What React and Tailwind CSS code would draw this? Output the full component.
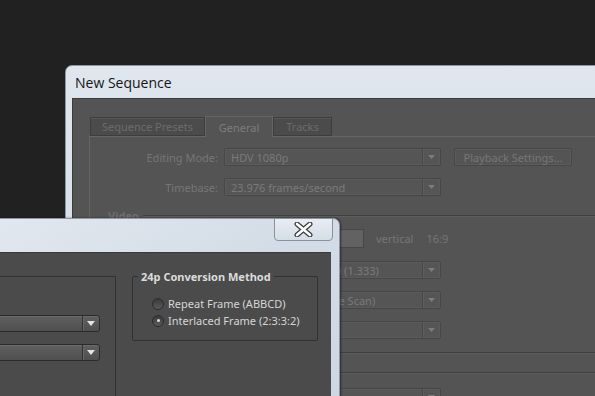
import React from "react";

const ui = { fontFamily: '"Noto Sans", "Open Sans", sans-serif' };

function Arrow({ color, w = 7, h = 4 }) {
  return (
    <svg width={w} height={h} viewBox={`0 0 ${w} ${h}`}>
      <polygon points={`0,0 ${w},0 ${w / 2},${h}`} fill={color} />
    </svg>
  );
}

function BackDrop({ text, className = "" }) {
  return (
    <div className={"flex shrink-0 h-[18px] w-[217px] rounded-[2px] border border-[#474747] bg-[#555555] shadow-[inset_0_0_0_1px_#5b5b5b] " + className}>
      <div className="flex-1 min-w-0 flex items-center pl-[6px] text-[11px] text-[#7a7a7a] leading-none overflow-hidden whitespace-nowrap">{text}</div>
      <div className="w-[18px] shrink-0 flex items-center justify-center border-l border-[#474747] shadow-[inset_1px_0_0_#5e5e5e]">
        <Arrow color="#7c7c7c" />
      </div>
    </div>
  );
}

function FrontDrop({ className = "" }) {
  return (
    <div className={"flex shrink-0 h-[17px] w-[118px] rounded-[3px] border border-[#2b2b2b] bg-gradient-to-b from-[#606060] to-[#4f4f4f] shadow-[inset_0_1px_0_#6a6a6a] " + className}>
      <div className="flex-1" />
      <div className="w-[17px] flex items-center justify-center border-l border-[#333333] shadow-[inset_1px_0_0_#666666]">
        <Arrow color="#e4e4e4" w={8} h={5} />
      </div>
    </div>
  );
}

function Radio({ checked, label }) {
  return (
    <div className="flex items-center h-[17px]">
      <div className="w-[12px] h-[12px] shrink-0 rounded-full border border-[#2c2c2c] bg-gradient-to-b from-[#3a3a3a] to-[#5a5a5a] flex items-center justify-center">
        {checked && <div className="w-[3px] h-[3px] rounded-full bg-[#e0e0e0]" />}
      </div>
      <span className="ml-[4px] text-[11px] text-[#d6d6d6] leading-none whitespace-nowrap">{label}</span>
    </div>
  );
}

export default function App() {
  return (
    <div className="relative w-[595px] h-[396px] overflow-hidden bg-[#212121]" style={ui}>
      {/* Back window: New Sequence */}
      <div className="absolute left-[65px] top-[65px] w-[600px] h-[400px] rounded-t-[7px] border border-[#8f98a2] bg-gradient-to-b from-[#dfe6ee] to-[#ccd6e1] flex flex-col">
        <div className="h-[32px] shrink-0 flex items-center pl-[9px] text-[14px] text-[#151515]" style={{ fontFamily: '"Open Sans", "Noto Sans", sans-serif' }}>
          New Sequence
        </div>
        <div className="flex-1 min-h-0 pl-[6px] flex flex-col">
          <div className="flex-1 min-h-0 bg-[#545454] border-t border-l border-[#3b3b3b] pt-[16px] pl-[16px] flex flex-col">
            {/* tabs */}
            <div className="flex items-end pl-[1px] h-[21px] shrink-0">
              <div className="w-[115px] h-[19px] flex items-center justify-center bg-[#4b4b4b] border border-[#3d3d3d] shadow-[inset_0_1px_0_#575757] text-[11px] text-[#6b6b6b] leading-none">Sequence Presets</div>
              <div className="w-[68px] h-[21px] -mb-[1px] flex items-center justify-center bg-[#545454] border-t border-l border-r border-[#656565] text-[11px] text-[#7d7d7d] leading-none relative z-10">General</div>
              <div className="w-[59px] h-[19px] flex items-center justify-center bg-[#4b4b4b] border border-[#3d3d3d] shadow-[inset_0_1px_0_#575757] text-[11px] text-[#6b6b6b] leading-none">Tracks</div>
            </div>
            {/* panel */}
            <div className="flex-1 border-t border-l border-[#656565] flex flex-col">
              <div className="mt-[11px] flex items-center">
                <div className="w-[128px] text-right text-[11px] text-[#767676] leading-none">Editing Mode:</div>
                <BackDrop text="HDV 1080p" className="ml-[6px]" />
                <div className="ml-[13px] w-[118px] h-[18px] rounded-[2px] border border-[#474747] shadow-[inset_0_0_0_1px_#5b5b5b] flex items-center justify-center text-[11px] text-[#777777] leading-none">Playback Settings...</div>
              </div>
              <div className="mt-[12px] flex items-center">
                <div className="w-[128px] text-right text-[11px] text-[#767676] leading-none">Timebase:</div>
                <BackDrop text="23.976 frames/second" className="ml-[6px]" />
              </div>
              <div className="mt-[12px] h-[14px] flex items-center">
                <div className="ml-[18px] text-[11px] font-bold text-[#6e6e6e] leading-none">Video</div>
                <div className="ml-[4px] flex-1 border-t border-[#404040] shadow-[0_1px_0_#5e5e5e]" />
              </div>
              <div className="mt-[7px] flex items-center h-[19px]">
                <div className="ml-[134px] w-[140px] h-[19px] bg-[#626262] border border-[#474747]" />
                <div className="ml-[12px] text-[11px] text-[#767676] leading-none">vertical</div>
                <div className="ml-[13px] text-[11px] text-[#767676] leading-none">16:9</div>
              </div>
              <BackDrop text="HD Anamorphic 1080 (1.333)" className="mt-[13px] ml-[134px]" />
              <BackDrop text="No Fields (Progressive Scan)" className="mt-[12px] ml-[134px]" />
              <BackDrop text="" className="mt-[12px] ml-[134px]" />
              <div className="mt-[13px] border-t border-[#3f3f3f] shadow-[0_1px_0_#5d5d5d]" />
              <div className="mt-[19px] border-t border-[#3f3f3f] shadow-[0_1px_0_#5d5d5d]" />
              <BackDrop text="" className="mt-[15px] ml-[134px]" />
            </div>
          </div>
        </div>
      </div>

      {/* Front window */}
      <div className="absolute left-[-20px] top-[218px] w-[360px] h-[200px] rounded-tr-[7px] border border-[#8f98a2] bg-gradient-to-br from-[#e2e8ef] via-[#d3dce6] to-[#cdd7e2] flex flex-col shadow-[1px_0_2px_rgba(0,0,0,0.5)]">
        <div className="h-[33px] shrink-0 relative">
          <div className="absolute right-[6px] -top-[1px] w-[59px] h-[23px] rounded-b-[4px] border border-[#8a939d] bg-gradient-to-b from-[#e8edf2] to-[#d5dde6] flex items-center justify-center">
            <svg width="19" height="15" viewBox="0 0 19 15">
              <path d="M3 2 L16 13 M16 2 L3 13" stroke="#3a3a3a" strokeWidth="5" strokeLinecap="round" />
              <path d="M3 2 L16 13 M16 2 L3 13" stroke="#ffffff" strokeWidth="2.6" strokeLinecap="round" />
            </svg>
          </div>
        </div>
        <div className="flex-1 min-h-0 overflow-hidden pr-[8px] flex">
          <div className="flex-1 bg-[#4b4b4b] border-t border-[#3a3a3a] flex items-start">
            {/* left group */}
            <div className="mt-[23px] w-[135px] h-[200px] shrink-0 border-t border-r border-[#313131] flex flex-col items-end pr-[15px]">
              <FrontDrop className="mt-[38px]" />
              <FrontDrop className="mt-[12px]" />
            </div>
            {/* 24p group */}
            <div className="relative ml-[16px] mt-[23px] w-[186px] h-[65px] shrink-0 border border-[#313131] rounded-[2px] flex flex-col pl-[19px] pt-[18px]">
              <div className="absolute -top-[8px] left-[5px] px-[3px] bg-[#4b4b4b] text-[11px] font-bold text-[#dcdcdc] leading-[15px] whitespace-nowrap">24p Conversion Method</div>
              <Radio label="Repeat Frame (ABBCD)" />
              <Radio checked label="Interlaced Frame (2:3:3:2)" />
            </div>
          </div>
        </div>
      </div>
    </div>
  );
}
